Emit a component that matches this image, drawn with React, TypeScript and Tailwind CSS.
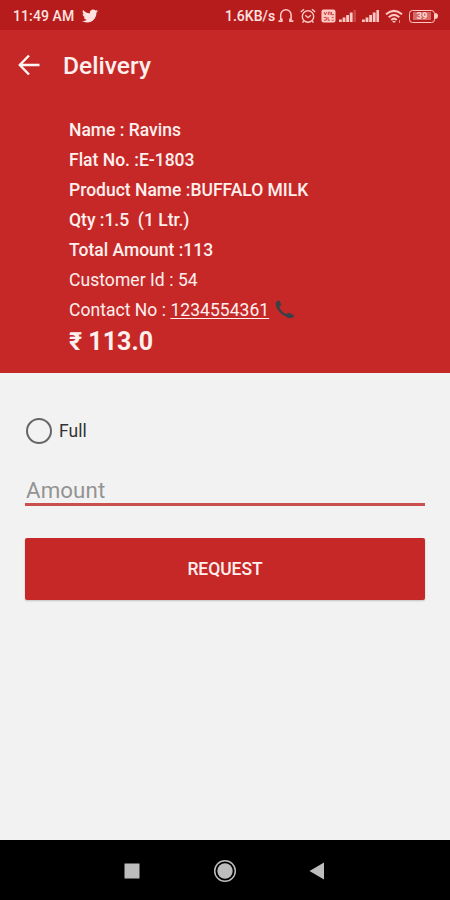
import React from "react";
import { FaTwitter } from "react-icons/fa";

const details = ["Name : Ravins", "Flat No. :E-1803", "Product Name :BUFFALO MILK", "Qty :1.5  (1 Ltr.)", "Total Amount :113"];

function Signal({ last }: { last: number }) {
  return (
    <svg width="18" height="14" viewBox="0 0 18 14" fill="#ffc9c4">
      <rect x="0" y="10.5" width="2.8" height="2.5" />
      <rect x="3.6" y="8.5" width="2.8" height="4.5" />
      <rect x="7.2" y="6" width="2.8" height="7" />
      <rect x="10.8" y="3.5" width="2.8" height="9.5" />
      <rect x="14.4" y="1" width="2.6" height="12" opacity={last} />
    </svg>
  );
}

function StatusBar() {
  return (
    <div className="flex h-[30px] shrink-0 items-center bg-[#b71c1c] pl-[13px] pt-[2px] text-[#ffe3e0]">
      <span className="w-[69px] whitespace-nowrap text-[14px] font-medium tracking-[0.1px]">11:49 AM</span>
      <FaTwitter size={16} />
      <span className="ml-[127px] w-[53px] whitespace-nowrap text-[14px] font-medium">1.6KB/s</span>
      <svg width="16" height="16" viewBox="0 0 16 16" fill="none" stroke="#ffc9c4" strokeWidth="1.5">
        <path d="M2.7 12V7a5.2 5.2 0 0 1 10.4 0v5" />
        <path d="M.5 13.2h3.3v-2.7M15.4 13.2H12v-2.7" strokeWidth="1.7" />
      </svg>
      <svg className="ml-[6px]" width="16" height="16" viewBox="0 0 16 16" fill="none" stroke="#ffc9c4" strokeWidth="1.4">
        <circle cx="8" cy="8.5" r="5.7" />
        <path d="M.8 4 4 1.2M15.2 4 12 1.2M5.3 7.3 8 9.7l2.9-2.4M3.8 13l-1.3 1.6M12.2 13l1.3 1.6" />
      </svg>
      <svg className="ml-[5px]" width="15" height="14" viewBox="0 0 15 14">
        <rect x=".5" y=".5" width="14" height="13" rx="2" fill="#ffc9c4" />
        <path d="M3 3l1.3 3L5.6 3M7.3 6V3.2h1.8V6M10.5 3v2.7H13M2.8 8.4h2.5v2.8H2.8M7 8v3.2h2M10.7 8.4h2M10.7 11.2h2" fill="none" stroke="#c44" strokeWidth="1" />
      </svg>
      <div className="ml-[3px] flex"><Signal last={0.25} /></div>
      <div className="ml-[5px] flex"><Signal last={1} /></div>
      <svg className="ml-[5px]" width="19" height="15" viewBox="0 0 19 15" fill="none" stroke="#ffc9c4" strokeWidth="2">
        <path d="M1 5.2Q9-1.4 17 5.2M3.7 8.2Q9 3.5 14.3 8.2M6.3 11Q9 8.3 11.7 11" />
        <path d="m7 12 2 2 2-2Z" fill="#ffc9c4" stroke="none" />
        <path d="M14.5 11v3" strokeWidth="1" opacity=".6" />
      </svg>
      <div className="ml-[5px] flex items-center">
        <div className="flex h-[13px] w-[26px] items-center justify-center rounded-[3.5px] border-[1.5px] border-[#ffc9c4]">
          <span className="flex h-[8px] w-[18px] items-center justify-center bg-[#d46a65] text-[9.5px] font-bold leading-none text-[#ffd8d4]">39</span>
        </div>
        <div className="h-[6px] w-[3px] rounded-r-full bg-[#ffc9c4]" />
      </div>
    </div>
  );
}

export default function App() {
  return (
    <div className="flex h-[900px] w-[450px] flex-col overflow-hidden bg-[#f2f2f2] font-[Roboto,sans-serif]">
      <StatusBar />
      <header className="h-[343px] shrink-0 bg-[#c62828] text-[#fff0ee]">
        <div className="flex h-[72px] items-center pl-[18px]">
          <svg width="22" height="22" viewBox="0 0 22 22" fill="none" stroke="#fff5f4" strokeWidth="2.4" className="-mt-[2px]">
            <path d="M21.5 11H2M11 1.5 1.8 11l9.2 9.5" />
          </svg>
          <h1 className="ml-[23px] text-[24.6px] font-medium leading-[30px]">Delivery</h1>
        </div>
        <div className="mt-[13px] pl-[69px] text-[17.5px] leading-[30px]">
          {details.map((line) => (
            <p key={line} className="whitespace-pre font-medium">{line}</p>
          ))}
          <p className="tracking-[0.06px]">Customer Id : 54</p>
          <p className="flex items-center tracking-[0.04px]">
            <span className="whitespace-pre">Contact No : <span className="underline decoration-1 underline-offset-2">1234554361</span></span>
            <svg className="ml-[6px]" width="20" height="20" viewBox="0 0 20 20">
              <path d="M1 2 3.3.5q1-.3 1.5.7l1.4 3q.2 1-.6 1.5L4.3 6.9q2.2 4.9 7 7.2l1.5-1q.9-.6 1.7 0l4 2q1 .7.4 1.6l-1.5 1.1q-1.8 1-5-.4C5.9 14.8-.4 8.5 1 2Z" fill="#3b4045" />
            </svg>
          </p>
          <p className="text-[25px] font-bold leading-[34px]">₹ 113.0</p>
        </div>
      </header>
      <main className="flex-1 px-[25px] pt-[43px]">
        <label className="flex h-[30px] items-center">
          <span className="ml-px h-[26px] w-[26px] rounded-full border-[2px] border-[#666]" />
          <span className="ml-[7px] mt-px text-[17.5px] text-[#333]">Full</span>
        </label>
        <div className="mt-[28px] h-[32px] border-b-[3px] border-[#ca5050] pl-px text-[22.3px] leading-[32px] tracking-[0.1px] text-[#939393]">Amount</div>
        <button className="mt-[32px] flex h-[62px] w-full items-center justify-center rounded-[2px] bg-[#c62828] text-[17.5px] font-medium tracking-[-0.05px] text-[#fff0ee] shadow-[0_1px_2px_rgba(0,0,0,0.2)]">REQUEST</button>
      </main>
      <nav className="h-[60px] shrink-0 bg-black">
        <svg width="450" height="60" viewBox="0 0 450 60" fill="#bdbdbd">
          <rect x="124.5" y="23.5" width="15" height="15" />
          <circle cx="225" cy="31" r="7.7" />
          <circle cx="225" cy="31" r="10.3" fill="none" stroke="#bdbdbd" strokeWidth="1.5" />
          <path d="m309.5 31 14.5-8.5v17Z" />
        </svg>
      </nav>
    </div>
  );
}
